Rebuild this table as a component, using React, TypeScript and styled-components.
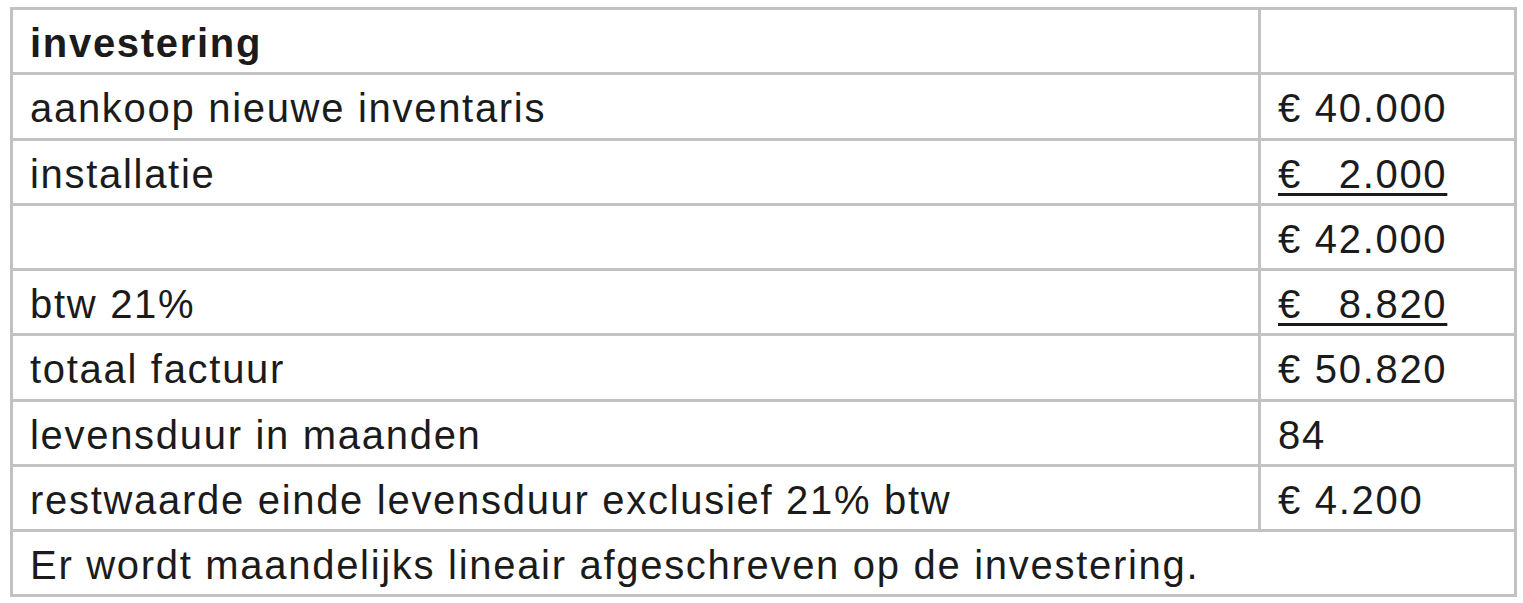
import styled, { createGlobalStyle } from "styled-components"

const GlobalStyle = createGlobalStyle`
  body {
    margin: 0;
    background: #ffffff;
    font-family: "Liberation Sans", Arial, sans-serif;
  }
`

const Page = styled.div`
  padding: 7px 6px 0 10px;
`

const Table = styled.table`
  width: 1507px;
  border-collapse: collapse;
  table-layout: fixed;
  color: #1b1b1b;
  font-size: 40px;
  letter-spacing: 1.7px;
  > tbody > tr > td {
    border: 3px solid #c2c2c2;
    height: 40.25px;
    padding: 13px 16px 9px 17px;
    vertical-align: top;
    line-height: 40px;
    white-space: pre;
  }
`

const Label = styled.td<{ $bold?: boolean }>`
  font-weight: ${(p) => (p.$bold ? 700 : 400)};
`

const Amount = styled.td<{ $underline?: boolean }>`
  > span {
    text-decoration: ${(p) => (p.$underline ? "underline" : "none")};
    text-decoration-thickness: 3px;
    text-underline-offset: 5px;
  }
`

const rows: { label: string; amount: string; bold?: boolean; underline?: boolean }[] = [
  { label: "investering", amount: "", bold: true },
  { label: "aankoop nieuwe inventaris", amount: "€ 40.000" },
  { label: "installatie", amount: "€ \u20072.000", underline: true },
  { label: "", amount: "€ 42.000" },
  { label: "btw 21%", amount: "€ \u20078.820", underline: true },
  { label: "totaal factuur", amount: "€ 50.820" },
  { label: "levensduur in maanden", amount: "84" },
  { label: "restwaarde einde levensduur exclusief 21% btw", amount: "€ 4.200" },
]

const App = () => {
  return (
    <>
      <GlobalStyle />
      <Page>
        <Table>
          <colgroup>
            <col style={{ width: "1248px" }} />
            <col />
          </colgroup>
          <tbody>
            {rows.map((r, i) => (
              <tr key={i}>
                <Label $bold={r.bold}>{r.label}</Label>
                <Amount $underline={r.underline}>
                  <span>{r.amount}</span>
                </Amount>
              </tr>
            ))}
            <tr>
              <Label colSpan={2}>Er wordt maandelijks lineair afgeschreven op de investering.</Label>
            </tr>
          </tbody>
        </Table>
      </Page>
    </>
  )
}

export default App
